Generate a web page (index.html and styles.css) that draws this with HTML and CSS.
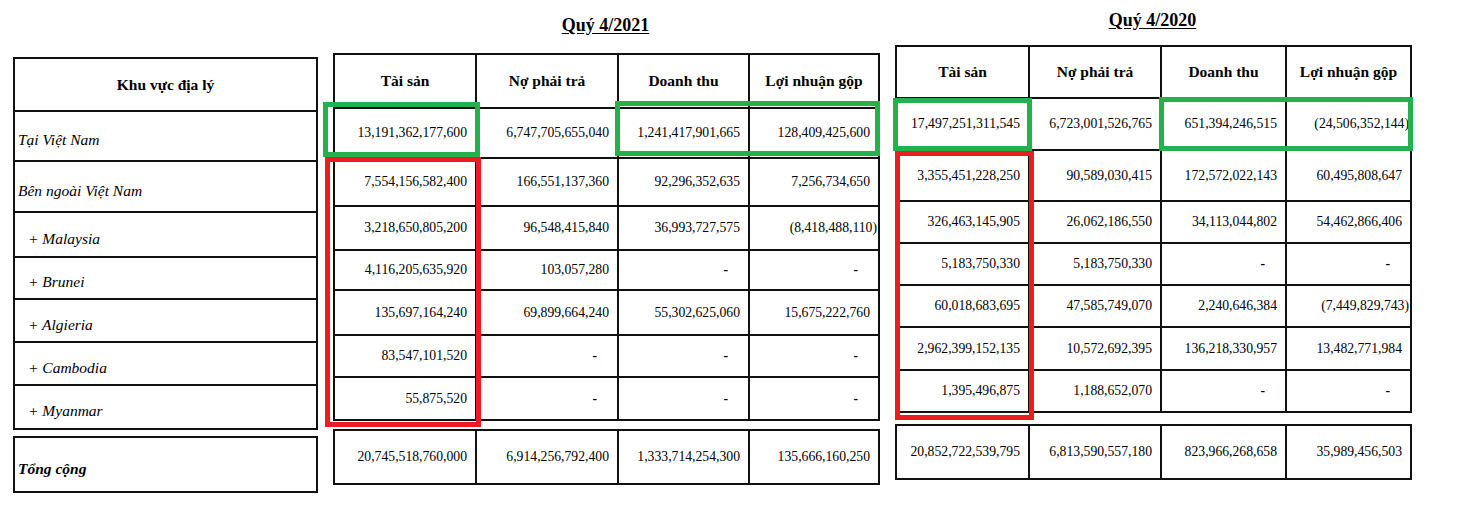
FILE: index.html
```html
<!DOCTYPE html>
<html lang="vi">
<head>
<meta charset="utf-8">
<title>Khu vực địa lý</title>
<link rel="stylesheet" href="styles.css">
</head>
<body>
<div class="page">
  <section class="group geo">
    <table class="tbl">
      <tr class="r-h"><th class="head">Khu vực địa lý</th></tr>
      <tr class="r1"><td class="lbl">Tại Việt Nam</td></tr>
      <tr class="r2"><td class="lbl">Bên ngoài Việt Nam</td></tr>
      <tr class="r3"><td class="lbl sub">+ Malaysia</td></tr>
      <tr class="r4"><td class="lbl sub">+ Brunei</td></tr>
      <tr class="r5"><td class="lbl sub">+ Algieria</td></tr>
      <tr class="r6"><td class="lbl sub">+ Cambodia</td></tr>
      <tr class="r7"><td class="lbl sub">+ Myanmar</td></tr>
    </table>
    <table class="tbl total">
      <tr class="r-t"><td class="lbl tot">Tổng cộng</td></tr>
    </table>
  </section>

  <section class="group y2021">
    <div class="title"><span>Quý 4/2021</span></div>
    <table class="tbl">
      <colgroup><col class="c1"><col class="c2"><col class="c3"><col class="c4"></colgroup>
      <tr class="r-h"><th>Tài sản</th><th>Nợ phải trả</th><th>Doanh thu</th><th>Lợi nhuận gộp</th></tr>
      <tr class="r1"><td>13,191,362,177,600</td><td>6,747,705,655,040</td><td>1,241,417,901,665</td><td>128,409,425,600</td></tr>
      <tr class="r2"><td>7,554,156,582,400</td><td>166,551,137,360</td><td>92,296,352,635</td><td>7,256,734,650</td></tr>
      <tr class="r3"><td>3,218,650,805,200</td><td>96,548,415,840</td><td>36,993,727,575</td><td><span class="neg">(8,418,488,110)</span></td></tr>
      <tr class="r4"><td>4,116,205,635,920</td><td>103,057,280</td><td class="dash">-</td><td class="dash">-</td></tr>
      <tr class="r5"><td>135,697,164,240</td><td>69,899,664,240</td><td>55,302,625,060</td><td>15,675,222,760</td></tr>
      <tr class="r6"><td>83,547,101,520</td><td class="dash">-</td><td class="dash">-</td><td class="dash">-</td></tr>
      <tr class="r7"><td>55,875,520</td><td class="dash">-</td><td class="dash">-</td><td class="dash">-</td></tr>
    </table>
    <table class="tbl total">
      <colgroup><col class="c1"><col class="c2"><col class="c3"><col class="c4"></colgroup>
      <tr class="r-t"><td>20,745,518,760,000</td><td>6,914,256,792,400</td><td>1,333,714,254,300</td><td>135,666,160,250</td></tr>
    </table>
    <div class="mark green m-a"></div>
    <div class="mark red m-b"></div>
    <div class="mark green m-c"></div>
  </section>

  <section class="group y2020">
    <div class="title"><span>Quý 4/2020</span></div>
    <table class="tbl">
      <colgroup><col class="c1"><col class="c2"><col class="c3"><col class="c4"></colgroup>
      <tr class="r-h"><th>Tài sản</th><th>Nợ phải trả</th><th>Doanh thu</th><th>Lợi nhuận gộp</th></tr>
      <tr class="r1"><td>17,497,251,311,545</td><td>6,723,001,526,765</td><td>651,394,246,515</td><td><span class="neg">(24,506,352,144)</span></td></tr>
      <tr class="r2"><td>3,355,451,228,250</td><td>90,589,030,415</td><td>172,572,022,143</td><td>60,495,808,647</td></tr>
      <tr class="r3"><td>326,463,145,905</td><td>26,062,186,550</td><td>34,113,044,802</td><td>54,462,866,406</td></tr>
      <tr class="r4"><td>5,183,750,330</td><td>5,183,750,330</td><td class="dash">-</td><td class="dash">-</td></tr>
      <tr class="r5"><td>60,018,683,695</td><td>47,585,749,070</td><td>2,240,646,384</td><td><span class="neg">(7,449,829,743)</span></td></tr>
      <tr class="r6"><td>2,962,399,152,135</td><td>10,572,692,395</td><td>136,218,330,957</td><td>13,482,771,984</td></tr>
      <tr class="r7"><td>1,395,496,875</td><td>1,188,652,070</td><td class="dash">-</td><td class="dash">-</td></tr>
    </table>
    <table class="tbl total">
      <colgroup><col class="c1"><col class="c2"><col class="c3"><col class="c4"></colgroup>
      <tr class="r-t"><td>20,852,722,539,795</td><td>6,813,590,557,180</td><td>823,966,268,658</td><td>35,989,456,503</td></tr>
    </table>
    <div class="mark green m-d"></div>
    <div class="mark red m-e"></div>
    <div class="mark green m-f"></div>
  </section>
</div>
</body>
</html>
```

FILE: styles.css
```css
* { box-sizing: border-box; }

html, body {
  margin: 0;
  padding: 0;
  background: #ffffff;
}

body {
  width: 1460px;
  height: 516px;
  overflow: hidden;
  font-family: "Liberation Serif", "Times New Roman", serif;
  color: #000;
}

.page {
  display: flex;
  align-items: flex-start;
  padding-left: 13px;
}

.group {
  position: relative;
}

.geo {
  width: 305px;
  margin-top: 57px;
}

.y2021 {
  width: 545px;
  margin-left: 15px;
}

.y2020 {
  width: 515px;
  margin-left: 17px;
}

.title {
  display: flex;
  justify-content: center;
  font-size: 18px;
  font-weight: bold;
  line-height: 20px;
}

.title span {
  text-decoration: underline;
  text-underline-offset: 2px;
}

.y2021 .title { height: 53px; padding-top: 15px; }
.y2020 .title { height: 45px; padding-top: 10px; }

.tbl {
  width: 100%;
  border-collapse: collapse;
  table-layout: fixed;
  border: 2px solid #000;
}

.tbl th,
.tbl td {
  border: 2px solid #111;
  padding: 0 8px 0 4px;
  vertical-align: middle;
}

.tbl th {
  font-size: 15.5px;
  font-weight: bold;
  text-align: center;
  padding: 0 4px;
}

.tbl td {
  font-size: 13.7px;
  text-align: right;
  white-space: nowrap;
}

.tbl td.lbl {
  text-align: left;
  font-style: italic;
  font-size: 15.5px;
  padding: 8px 4px 0 3px;
}

.tbl td.sub {
  padding-left: 13px;
}

.tbl td.tot {
  font-weight: bold;
}

.tbl td.dash {
  padding-right: 20px;
  font-weight: bold;
}

.neg {
  margin-right: -7px;
}

.total {
  margin-top: 6px;
}

/* column widths */
.y2021 .c1 { width: 142px; }
.y2021 .c2 { width: 142px; }
.y2021 .c3 { width: 131px; }
.y2021 .c4 { width: 130px; }

.y2020 .c1 { width: 133px; }
.y2020 .c2 { width: 132px; }
.y2020 .c3 { width: 125px; }
.y2020 .c4 { width: 125px; }

/* row heights: geography */
.geo .r-h { height: 53px; }
.geo .r1 { height: 50px; }
.geo .r2 { height: 51px; }
.geo .r3 { height: 45px; }
.geo .r4 { height: 42px; }
.geo .r5 { height: 43px; }
.geo .r6 { height: 43px; }
.geo .r7 { height: 44px; }
.geo .r-t { height: 55px; }

/* row heights: Q4/2021 */
.y2021 .r-h { height: 54px; }
.y2021 .r1 { height: 50px; }
.y2021 .r2 { height: 48px; }
.y2021 .r3 { height: 44px; }
.y2021 .r4 { height: 40px; }
.y2021 .r5 { height: 45px; }
.y2021 .r6 { height: 42px; }
.y2021 .r7 { height: 43px; }
.y2021 .total { margin-top: 8px; }
.y2021 .r-t { height: 54px; }

/* row heights: Q4/2020 */
.y2020 .r-h { height: 52px; }
.y2020 .r1 { height: 52px; }
.y2020 .r2 { height: 51px; }
.y2020 .r3 { height: 42px; }
.y2020 .r4 { height: 42px; }
.y2020 .r5 { height: 42px; }
.y2020 .r6 { height: 43px; }
.y2020 .r7 { height: 42px; }
.y2020 .total { margin-top: 11px; }
.y2020 .r-t { height: 54px; }

/* highlight overlays */
.mark {
  position: absolute;
  border: 5px solid;
  pointer-events: none;
}

.green { border-color: #22b14c; }
.red { border-color: #ed1c24; }

.m-a { left: -10px; top: 102px; width: 157px; height: 55px; }
.m-b { left: -8px;  top: 157px; width: 156px; height: 270px; }
.m-c { left: 282px; top: 101px; width: 265px; height: 55px; }

.m-d { left: -2px;  top: 98px;  width: 139px; height: 53px; }
.m-e { left: 0px;   top: 151px; width: 139px; height: 269px; }
.m-f { left: 264px; top: 97px;  width: 254px; height: 54px; }
```
